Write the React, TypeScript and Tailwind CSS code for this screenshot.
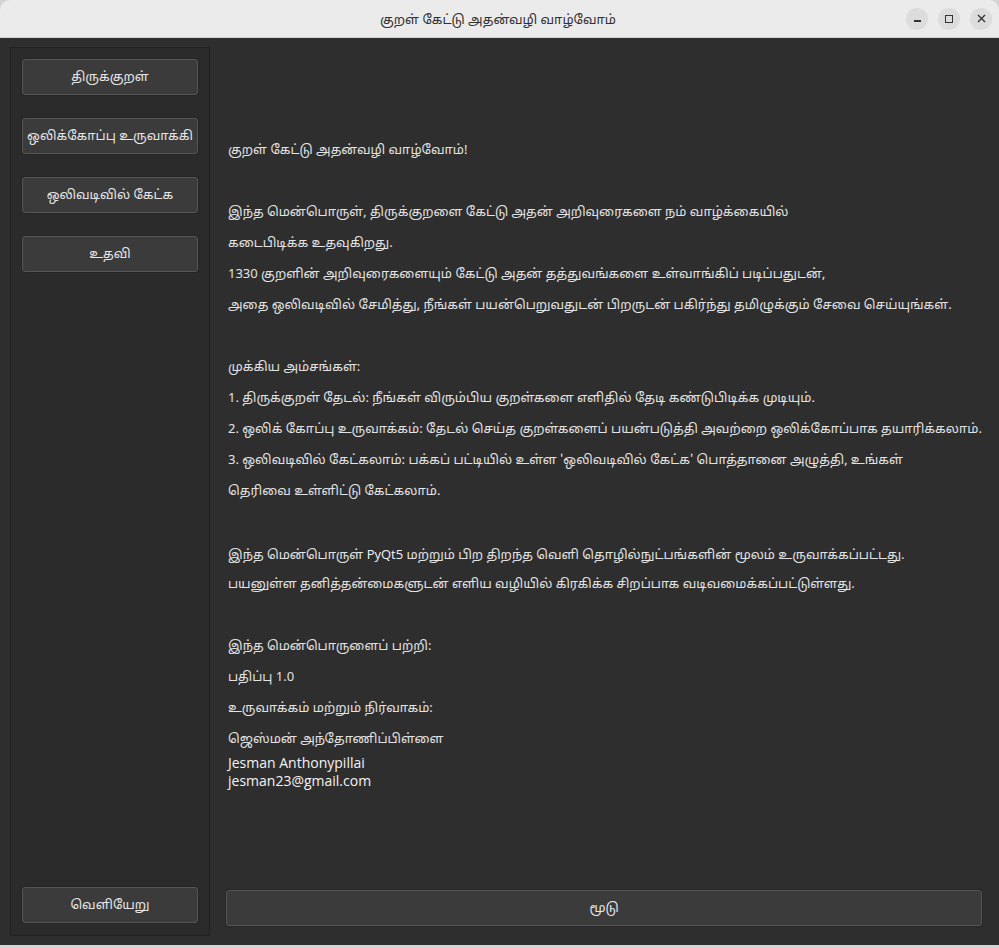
import React from "react";

const tamilFont = { fontFamily: '"Noto Sans Tamil", "Noto Sans", "DejaVu Sans", sans-serif' };
const latin = { fontFamily: '"Open Sans", "Noto Sans", sans-serif' };

function SideButton({ label }: { label: string }) {
  return (
    <button className="h-[36px] w-full whitespace-nowrap rounded-[3px] border border-[#565656] bg-[#3b3b3b] pt-[3px] text-[13px] text-[#e6e6e6] shadow-[0_0_0_1px_#262626]">
      {label}
    </button>
  );
}

function Line({ children }: { children: React.ReactNode }) {
  return <div className="h-[31px] whitespace-nowrap leading-[31px]">{children}</div>;
}

export default function App() {
  return (
    <div className="flex h-[948px] w-[999px] flex-col overflow-hidden bg-[#d4d4d4]" style={tamilFont}>
      <div className="flex h-[38px] shrink-0 items-center rounded-t-[10px] border-b border-[#d0d0d0] bg-[#ebebeb]">
        <div className="flex-1 pl-[90px] pt-[6px] text-center text-[13px] text-[#303030]">குறள் கேட்டு அதன்வழி வாழ்வோம்</div>
        <div className="flex items-center gap-[10px] pr-[7px]">
          <div className="flex h-[22px] w-[22px] items-center justify-center rounded-full bg-[#dcdcdc]">
            <div className="mt-[5px] h-[1.5px] w-[7px] bg-[#333]" />
          </div>
          <div className="flex h-[22px] w-[22px] items-center justify-center rounded-full bg-[#dcdcdc]">
            <div className="h-[8px] w-[8px] border-[1.5px] border-[#333]" />
          </div>
          <div className="flex h-[22px] w-[22px] items-center justify-center rounded-full bg-[#dcdcdc]">
            <svg width="9" height="9" viewBox="0 0 9 9"><path d="M1 1L8 8M8 1L1 8" stroke="#333" strokeWidth="1.4" /></svg>
          </div>
        </div>
      </div>
      <div className="flex flex-1 gap-[16px] bg-[#2e2e2e] pl-[10px] pr-[17px] pt-[9px] pb-[9px]">
        <div className="flex w-[200px] flex-col border border-[#212121] bg-[#2b2b2b] px-[11px] pt-[11px] pb-[12px]">
          <div className="flex flex-col gap-[23px]">
            <SideButton label="திருக்குறள்" />
            <SideButton label="ஒலிக்கோப்பு உருவாக்கி" />
            <SideButton label="ஒலிவடிவில் கேட்க" />
            <SideButton label="உதவி" />
          </div>
          <div className="mt-auto">
            <SideButton label="வெளியேறு" />
          </div>
        </div>
        <div className="flex flex-1 flex-col">
          <div className="flex flex-1 flex-col justify-center pb-[12px] pl-[2px] text-[13px] text-[#e2e2e2]">
            <Line>குறள் கேட்டு அதன்வழி வாழ்வோம்!</Line>
            <Line>{"\u00a0"}</Line>
            <Line>இந்த மென்பொருள், திருக்குறளை கேட்டு அதன் அறிவுரைகளை நம் வாழ்க்கையில்</Line>
            <Line>கடைபிடிக்க உதவுகிறது.</Line>
            <Line>1330 குறளின் அறிவுரைகளையும் கேட்டு அதன் தத்துவங்களை உள்வாங்கிப் படிப்பதுடன்,</Line>
            <Line>அதை ஒலிவடிவில் சேமித்து, நீங்கள் பயன்பெறுவதுடன் பிறருடன் பகிர்ந்து தமிழுக்கும் சேவை செய்யுங்கள்.</Line>
            <Line>{"\u00a0"}</Line>
            <Line>முக்கிய அம்சங்கள்:</Line>
            <Line>1. திருக்குறள் தேடல்: நீங்கள் விரும்பிய குறள்களை எளிதில் தேடி கண்டுபிடிக்க முடியும்.</Line>
            <Line>2. ஒலிக் கோப்பு உருவாக்கம்: தேடல் செய்த குறள்களைப் பயன்படுத்தி அவற்றை ஒலிக்கோப்பாக தயாரிக்கலாம்.</Line>
            <Line>3. ஒலிவடிவில் கேட்கலாம்: பக்கப் பட்டியில் உள்ள 'ஒலிவடிவில் கேட்க' பொத்தானை அழுத்தி, உங்கள்</Line>
            <Line>தெரிவை உள்ளிட்டு கேட்கலாம்.</Line>
            <Line>{"\u00a0"}</Line>
            <Line>
              இந்த மென்பொருள் <span className="font-medium text-[#f4f4f4]" style={latin}>PyQt5</span> மற்றும் பிற திறந்த வெளி தொழில்நுட்பங்களின் மூலம் உருவாக்கப்பட்டது.
            </Line>
            <Line>பயனுள்ள தனித்தன்மைகளுடன் எளிய வழியில் கிரகிக்க சிறப்பாக வடிவமைக்கப்பட்டுள்ளது.</Line>
            <Line>{"\u00a0"}</Line>
            <Line>இந்த மென்பொருளைப் பற்றி:</Line>
            <Line>பதிப்பு 1.0</Line>
            <Line>உருவாக்கம் மற்றும் நிர்வாகம்:</Line>
            <Line>ஜெஸ்மன் அந்தோணிப்பிள்ளை</Line>
            <div className="mt-[-2px] text-[14px] font-medium leading-[18px] text-[#f4f4f4]" style={latin}>
              <div>Jesman Anthonypillai</div>
              <div>jesman23@gmail.com</div>
            </div>
          </div>
          <button className="mb-[10px] h-[36px] w-full rounded-[3px] border border-[#565656] bg-[#3b3b3b] pt-[3px] text-[13px] text-[#e6e6e6] shadow-[0_0_0_1px_#262626]">
            மூடு
          </button>
        </div>
      </div>
      <div className="h-[3px] shrink-0 bg-[#d4d4d4]" />
    </div>
  );
}
